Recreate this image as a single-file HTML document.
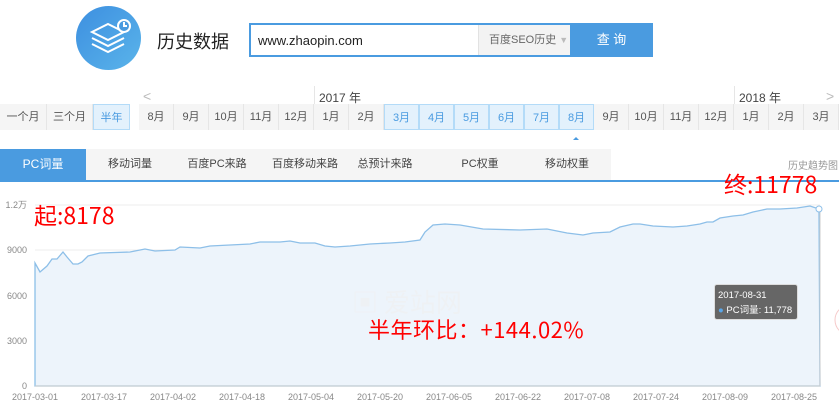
<!DOCTYPE html>
<html><head><meta charset="utf-8"><style>
*{margin:0;padding:0;box-sizing:border-box}
body{width:839px;height:403px;background:#fff;position:relative;overflow:hidden;font-family:"Liberation Sans","Noto Sans CJK SC",sans-serif;color:#333}
.a{position:absolute}
.cell{position:absolute;top:104px;height:26px;width:35px;background:#f5f5f5;border-right:1px solid #e6e6e6;font-size:11px;color:#555;text-align:center;line-height:26px}
.sel{background:#e3f1fc;border:1px solid #b3dbf8;color:#4a9be0}
.tab{position:absolute;top:149px;height:31px;font-size:11px;color:#444;line-height:31px;text-align:center}
.red{color:#f00;font-size:22px;font-family:"WenQuanYi Zen Hei","Noto Sans CJK SC",sans-serif;line-height:1;white-space:nowrap}
</style></head><body>
<div class="a" style="left:76px;top:6px;width:65px;height:64px;border-radius:50%;background:linear-gradient(135deg,#3d8fe0,#5ab4ea)"></div>
<svg class="a" style="left:80px;top:10px" width="60" height="58" viewBox="0 0 60 58" fill="none" stroke="#fff" stroke-width="2">
<path d="M28 14 L44 22 L28 30 L12 22 Z"/><path d="M12 28 L28 36 L44 28"/><path d="M12 34 L28 42 L44 34"/>
<circle cx="44" cy="16" r="6" fill="#4a9be0"/><path d="M44 12 V16 H47"/></svg>
<div class="a" style="left:157px;top:28px;font-size:18px;color:#222">历史数据</div>
<div class="a" style="left:249px;top:23px;width:404px;height:34px;border:2px solid #4a9be0;background:#fff"></div>
<div class="a" style="left:258px;top:33px;font-size:13px;color:#222">www.zhaopin.com</div>
<div class="a" style="left:478px;top:25px;width:92px;height:30px;background:#f3f3f3;border-left:1px solid #e2e2e2;font-size:11px;color:#666;line-height:30px;padding-left:10px">百度SEO历史 <span style="color:#bbb;font-size:9px">▼</span></div>
<div class="a" style="left:570px;top:23px;width:83px;height:34px;background:#4a9be0;color:#fff;font-size:13px;text-align:center;line-height:34px">查 询</div>

<div class="cell" style="left:0;width:47px">一个月</div>
<div class="cell" style="left:47px;width:46px">三个月</div>
<div class="cell sel" style="left:93px;width:37px">半年</div>
<div class="a" style="left:143px;top:88px;color:#bbb;font-size:14px">&lt;</div>
<div class="a" style="left:826px;top:88px;color:#bbb;font-size:14px">&gt;</div>
<div class="a" style="left:314px;top:86px;width:1px;height:18px;background:#e6e6e6"></div>
<div class="a" style="left:319px;top:89px;font-size:12px;color:#444">2017 年</div>
<div class="a" style="left:734px;top:86px;width:1px;height:18px;background:#e6e6e6"></div>
<div class="a" style="left:739px;top:89px;font-size:12px;color:#444">2018 年</div>
<div class="cell" style="left:139px">8月</div><div class="cell" style="left:174px">9月</div><div class="cell" style="left:209px">10月</div><div class="cell" style="left:244px">11月</div><div class="cell" style="left:279px">12月</div><div class="cell" style="left:314px">1月</div><div class="cell" style="left:349px">2月</div>
<div class="cell sel" style="left:384px">3月</div><div class="cell sel" style="left:419px">4月</div><div class="cell sel" style="left:454px">5月</div><div class="cell sel" style="left:489px">6月</div><div class="cell sel" style="left:524px">7月</div><div class="cell sel" style="left:559px">8月</div>
<div class="cell" style="left:594px">9月</div><div class="cell" style="left:629px">10月</div><div class="cell" style="left:664px">11月</div><div class="cell" style="left:699px">12月</div><div class="cell" style="left:734px">1月</div><div class="cell" style="left:769px">2月</div><div class="cell" style="left:804px">3月</div>
<div class="a" style="left:573px;top:134px;width:0;height:0;border:3px solid transparent;border-bottom-color:#4a9be0"></div>

<div class="a" style="left:86px;top:149px;width:525px;height:31px;background:#f5f5f5"></div>
<div class="tab" style="left:0;width:86px;background:#4a9be0;color:#fff;font-size:12px">PC词量</div>
<div class="tab" style="left:90px;width:80px">移动词量</div>
<div class="tab" style="left:177px;width:80px">百度PC来路</div>
<div class="tab" style="left:260px;width:90px">百度移动来路</div>
<div class="tab" style="left:345px;width:80px">总预计来路</div>
<div class="tab" style="left:440px;width:80px">PC权重</div>
<div class="tab" style="left:527px;width:80px">移动权重</div>
<div class="a" style="left:788px;top:157px;font-size:10px;color:#999">历史趋势图</div>
<div class="a" style="left:0;top:180px;width:839px;height:2px;background:#4a9be0"></div>

<svg class="a" style="left:0;top:190px" width="839" height="213" viewBox="0 190 839 213" font-family="Liberation Sans" font-size="9" fill="#888">
<g stroke="#ececec"><line x1="35" y1="205" x2="820" y2="205"/><line x1="35" y1="250" x2="820" y2="250"/><line x1="35" y1="296" x2="820" y2="296"/><line x1="35" y1="341" x2="820" y2="341"/></g>
<path fill="#edf4fb" stroke="#8dbfe8" stroke-width="1.3" d="M35 263 L40 272 L47 266 L52 259 L57 259 L63 252 L67 257 L73 264 L78 264 L82 262 L88 256 L100 253 L130 252 L145 249 L155 251 L175 250 L180 247 L200 248 L210 246 L230 245 L250 244 L260 242 L280 242 L290 241 L300 243 L315 243 L325 246 L335 247 L350 246 L370 244 L390 243 L405 242 L420 240 L425 232 L433 225 L445 224 L460 225 L483 229 L520 230 L547 229 L567 233 L583 235 L593 233 L610 232 L620 227 L633 224 L640 224 L653 226 L673 227 L687 226 L700 224 L707 222 L713 222 L720 218 L733 216 L743 215 L753 212 L767 209 L780 209 L797 208 L810 206 L819 209 L820 386 L35 386 Z"/>
<line x1="35" y1="386" x2="820" y2="386" stroke="#ccc"/><line x1="820" y1="206" x2="820" y2="386" stroke="#ccc"/>
<circle cx="819" cy="209" r="3" fill="#fff" stroke="#8dbfe8"/>
<g text-anchor="end"><text x="27" y="208">1.2万</text><text x="27" y="253">9000</text><text x="27" y="299">6000</text><text x="27" y="344">3000</text><text x="27" y="389">0</text></g>
<g text-anchor="middle"><text x="35" y="400">2017-03-01</text><text x="104" y="400">2017-03-17</text><text x="173" y="400">2017-04-02</text><text x="242" y="400">2017-04-18</text><text x="311" y="400">2017-05-04</text><text x="380" y="400">2017-05-20</text><text x="449" y="400">2017-06-05</text><text x="518" y="400">2017-06-22</text><text x="587" y="400">2017-07-08</text><text x="656" y="400">2017-07-24</text><text x="725" y="400">2017-08-09</text><text x="794" y="400">2017-08-25</text></g>
<text x="352" y="312" font-size="26" fill="#eef1f4" font-family="Noto Sans CJK SC">▣ 爱站网</text>
<circle cx="850" cy="320" r="15" fill="none" stroke="#f6c9c9"/>
</svg>
<div class="a" style="left:714px;top:284px;width:84px;height:36px;background:#666;border:1px solid #ddd;border-radius:3px;color:#fff;font-size:9.5px;padding:3px 3px;line-height:15px;white-space:nowrap">2017-08-31<br><span style="color:#5aa6e8">●</span> PC词量: 11,778</div>
<div class="a red" style="left:34px;top:203px;font-size:23px">起:8178</div>
<div class="a red" style="left:724px;top:172px;font-size:23px">终:11778</div>
<div class="a red" style="left:368px;top:318px;letter-spacing:0.5px">半年环比：+144.02%</div>
</body></html>
